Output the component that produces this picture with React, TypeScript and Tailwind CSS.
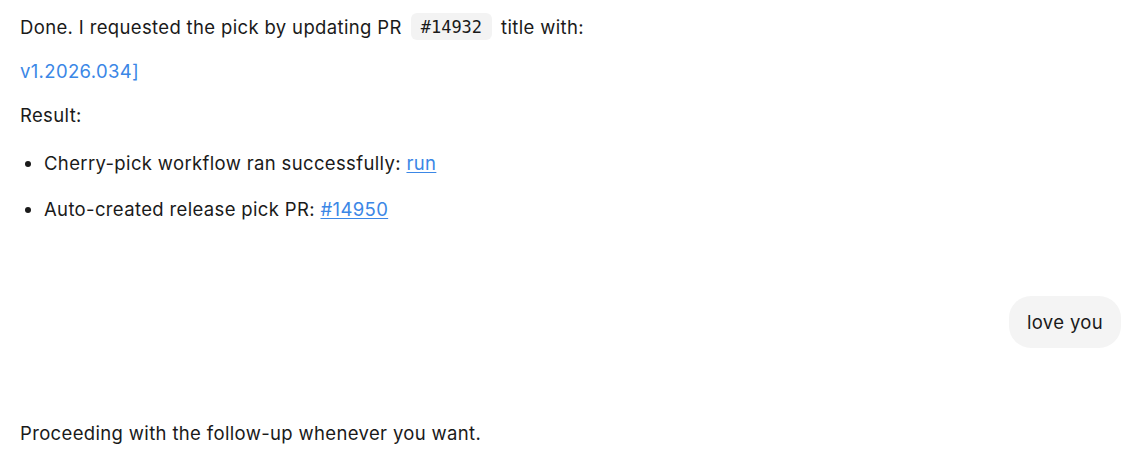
export default function App() {
  return (
    <div className="w-[1138px] h-[474px] bg-white text-[#1a1a1a] overflow-hidden font-['Inter',sans-serif] text-[18.5px] tracking-[0.35px] leading-[26px] px-5">
      <p className="pt-[13px] flex items-center">
        <span>Done. I requested the pick by updating PR</span>
        <code className="mx-[9px] rounded-md bg-[#f3f3f3] px-[10px] h-[27px] inline-flex items-center font-['DejaVu_Sans_Mono',monospace] text-[17px] tracking-normal">
          #14932
        </code>
        <span>title with:</span>
      </p>
      <p className="mt-[18px] text-[#3b87e6]">v1.2026.034]</p>
      <p className="mt-[18px]">Result:</p>
      <ul className="mt-[22px] pl-[24px] list-disc">
        <li>
          Cherry-pick workflow ran successfully:{' '}
          <a href="#" className="text-[#3b87e6] underline underline-offset-2">run</a>
        </li>
        <li className="mt-[20px]">
          Auto-created release pick PR:{' '}
          <a href="#" className="text-[#3b87e6] underline underline-offset-2">#14950</a>
        </li>
      </ul>
      <div className="mt-[74px] flex justify-end">
        <div className="rounded-[22px] bg-[#f4f4f4] px-[18px] py-[13px] -mr-[3px]">love you</div>
      </div>
      <p className="mt-[72px]">Proceeding with the follow-up whenever you want.</p>
    </div>
  )
}
